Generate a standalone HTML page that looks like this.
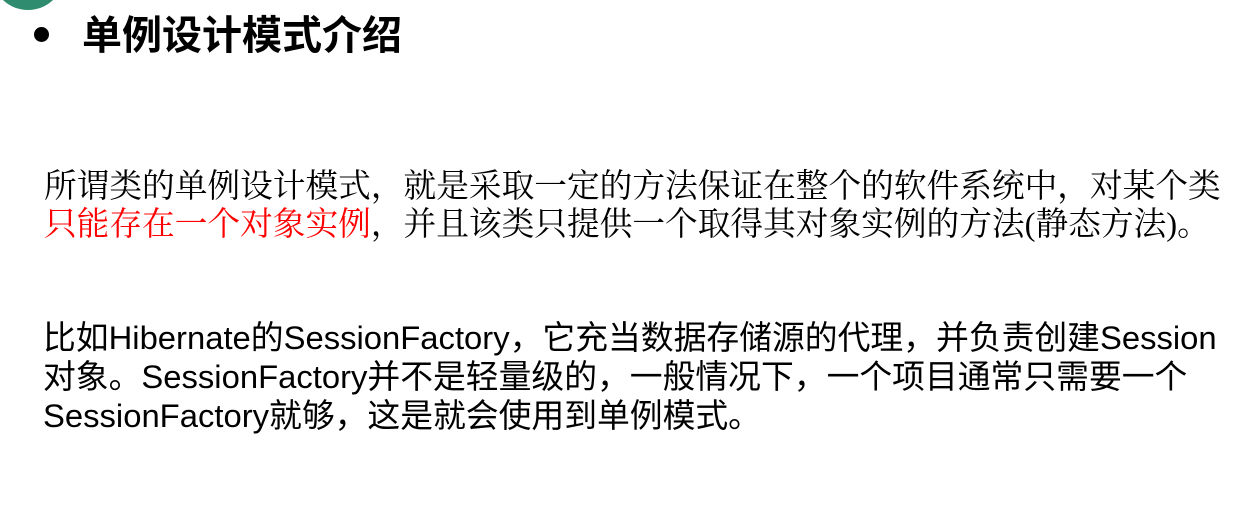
<!DOCTYPE html>
<html><head><meta charset="utf-8"><style>
body{margin:0;width:1249px;height:513px;background:#fff;position:relative;overflow:hidden}
.c{position:absolute;left:-6px;top:-52px;width:68px;height:62px;border-radius:50%;background:#2f8c6f}
.b{position:absolute;left:34px;top:27px;width:15px;height:15px;border-radius:50%;background:#000}
.t{position:absolute;left:82px;top:3px;font:bold 40px "WenQuanYi Zen Hei","Noto Sans CJK SC",sans-serif;color:#000;white-space:nowrap}
.s{position:absolute;left:44px;font:32.7px "Liberation Serif","Noto Serif CJK SC",serif;white-space:nowrap;color:#000}
.p{position:absolute;left:43px;font:32.8px "Liberation Sans","Noto Sans CJK SC",sans-serif;white-space:nowrap;color:#000}
.r{color:#f00}
</style></head><body>
<div class="c"></div><div class="b"></div>
<div class="t">单例设计模式介绍</div>
<div class="s" style="top:160px">所谓类的单例设计模式，就是采取一定的方法保证在整个的软件系统中，对某个类</div>
<div class="s" style="top:198px"><span class="r">只能存在一个对象实例</span>，并且该类只提供一个取得其对象实例的方法(静态方法)。</div>
<div class="p" style="top:312px">比如Hibernate的SessionFactory，它充当数据存储源的代理，并负责创建Session</div>
<div class="p" style="top:351px">对象。SessionFactory并不是轻量级的，一般情况下，一个项目通常只需要一个</div>
<div class="p" style="top:390px">SessionFactory就够，这是就会使用到单例模式。</div>
</body></html>
